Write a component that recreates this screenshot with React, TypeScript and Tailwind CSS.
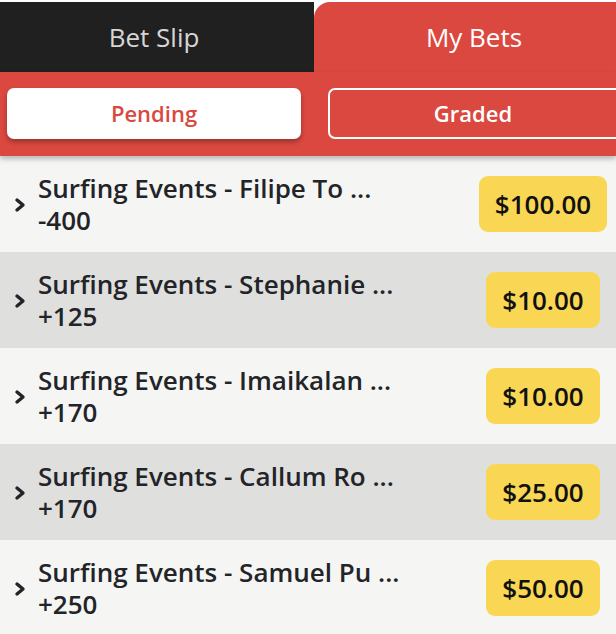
import React from "react";

const rows = [
  { name: "Surfing Events - Filipe To ...", odds: "-400", amount: "$100.00" },
  { name: "Surfing Events - Stephanie ...", odds: "+125", amount: "$10.00" },
  { name: "Surfing Events - Imaikalan ...", odds: "+170", amount: "$10.00" },
  { name: "Surfing Events - Callum Ro ...", odds: "+170", amount: "$25.00" },
  { name: "Surfing Events - Samuel Pu ...", odds: "+250", amount: "$50.00" },
];

function Chevron() {
  return (
    <svg width="14" height="16" viewBox="0 0 14 16" className="shrink-0">
      <path d="M4 3 L10 8 L4 13" fill="none" stroke="#222428" strokeWidth="3.4" strokeLinecap="round" strokeLinejoin="round" />
    </svg>
  );
}

export default function App() {
  return (
    <div className="w-[616px] h-[634px] overflow-hidden bg-[#f5f5f4]" style={{ fontFamily: '"Open Sans", "Noto Sans", sans-serif' }}>
      <div className="bg-white pt-[2px]">
        <div className="flex h-[70px]">
          <div className="w-[314px] bg-[#212021] flex items-center justify-center pr-[6px] text-[26px] text-[#d6d6d6]">Bet Slip</div>
          <div className="flex-1 bg-[#db4840] rounded-tl-[16px] flex items-center justify-center pl-[18px] text-[26px] text-white">My Bets</div>
        </div>
      </div>
      <div className="relative z-10 bg-[#db4840] h-[84px] pt-[16px] pl-[7px] flex gap-[27px] overflow-hidden shadow-[0_3px_5px_rgba(0,0,0,0.25)]">
        <div className="w-[294px] h-[51px] shrink-0 bg-white rounded-[7px] flex items-center justify-center text-[22px] font-semibold text-[#db4840] shadow-[0_3px_5px_rgba(0,0,0,0.3)]">Pending</div>
        <div className="w-[296px] h-[51px] shrink-0 border-2 border-white rounded-[7px] flex items-center justify-center pr-[6px] text-[22px] font-semibold text-white">Graded</div>
      </div>
      <div className="flex flex-col">
        {rows.map((r, i) => (
          <div key={i} className={`h-[96px] flex items-center ${i % 2 === 0 ? "bg-[#f5f5f4]" : "bg-[#dfdfde]"}`}>
            <div className="w-[38px] flex justify-center pl-[2px] pt-[1px]">
              <Chevron />
            </div>
            <div className="flex-1 text-[26px] font-semibold leading-[32px] text-[#222428]">
              <div>{r.name}</div>
              <div>{r.odds}</div>
            </div>
            <div className="w-[140px] mr-[3px] flex justify-center">
              <div className="bg-[#f9d755] rounded-[9px] h-[56px] px-[16px] flex items-center text-[26px] font-semibold text-[#111]">{r.amount}</div>
            </div>
          </div>
        ))}
      </div>
    </div>
  );
}
